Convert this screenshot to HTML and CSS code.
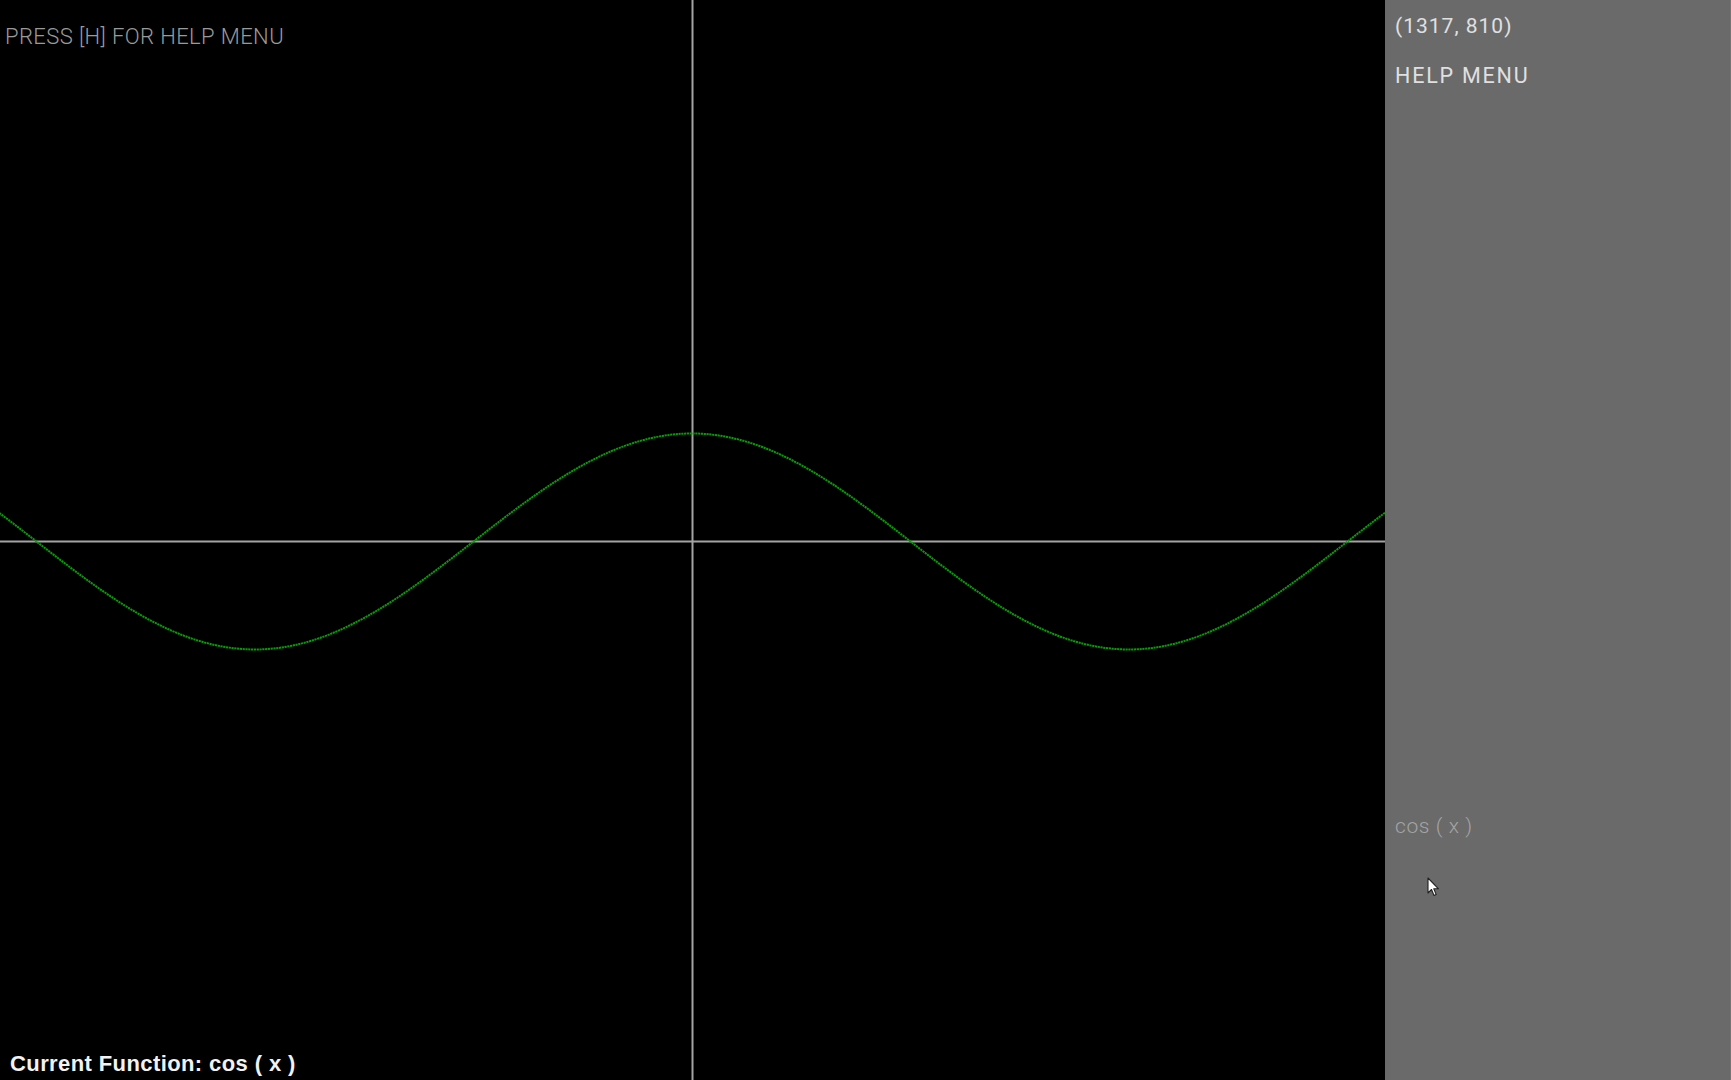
FILE: index.html
```html
<!DOCTYPE html>
<html>
<head>
<meta charset="utf-8">
<link rel="stylesheet" href="styles.css">
</head>
<body>
<div class="app">
  <main class="graph">
    <svg class="plot" width="1385" height="1080" viewBox="0 0 1385 1080">
      <line class="axis" x1="0" y1="541.5" x2="1385" y2="541.5"/>
      <line class="axis" x1="692.5" y1="0" x2="692.5" y2="1080"/>
      <g transform="translate(692,541.5) scale(139.1,-108)">
        <path class="curve" d="M -6.2832 1 C -5.7147 1 -5.2247 0.5123 -4.7124 0 C -4.2001 -0.5123 -3.7101 -1 -3.1416 -1 C -2.5731 -1 -2.0831 -0.5123 -1.5708 0 C -1.0585 0.5123 -0.5685 1 0 1 C 0.5685 1 1.0585 0.5123 1.5708 0 C 2.0831 -0.5123 2.5731 -1 3.1416 -1 C 3.7101 -1 4.2001 -0.5123 4.7124 0 C 5.2247 0.5123 5.7147 1 6.2832 1"/>
      </g>
    </svg>
    <div class="hint">PRESS [H] FOR HELP MENU</div>
    <div class="current">Current Function: cos ( x )</div>
  </main>
  <aside class="side">
    <div class="coords">(1317, 810)</div>
    <div class="help">HELP MENU</div>
    <div class="func">cos ( x )</div>
    <svg class="cursor" width="14" height="21" viewBox="0 0 14 21">
      <path d="M1 1 L1 16 L4.5 12.5 L7 18.5 L9.2 17.6 L6.8 11.8 L11.5 11.8 Z" fill="#fff" stroke="#222" stroke-width="1.1" stroke-linejoin="round"/>
    </svg>
  </aside>
</div>
</body>
</html>
```
FILE: styles.css
```css
html, body {
  margin: 0;
  padding: 0;
  background: #000;
  overflow: hidden;
}
.app {
  display: flex;
  width: 1731px;
  height: 1080px;
}
.graph {
  position: relative;
  width: 1385px;
  height: 1080px;
  background: #000;
  flex: none;
}
.plot {
  display: block;
}
.axis {
  stroke: #a3a3a3;
  stroke-width: 2;
}
.curve {
  fill: none;
  stroke: #0c980c;
  stroke-width: 2;
  vector-effect: non-scaling-stroke;
  stroke-dasharray: 2.2 0.6;
}
.hint {
  position: absolute;
  left: 5px;
  top: 24px;
  font-family: Roboto, "Liberation Sans", sans-serif;
  font-weight: 300;
  font-size: 22px;
  line-height: 26px;
  color: #9a9a9a;
  letter-spacing: 0.4px;
}
.current {
  position: absolute;
  left: 10px;
  top: 1051px;
  font-family: "Liberation Sans", Arial, sans-serif;
  font-weight: 700;
  font-size: 22px;
  line-height: 26px;
  letter-spacing: 0.4px;
  color: #f2f2f2;
}
.side {
  position: relative;
  flex: 1;
  background: #6a6a6a;
  padding: 13px 0 0 10px;
  box-sizing: border-box;
  border-right: 1px solid #747474;
  font-family: Roboto, "Liberation Sans", sans-serif;
}
.coords {
  font-size: 21px;
  line-height: 26px;
  letter-spacing: 1px;
  color: #e0e0e0;
}
.help {
  margin-top: 24px;
  font-size: 21.5px;
  line-height: 26px;
  letter-spacing: 1.8px;
  color: #e0e0e0;
}
.func {
  margin-top: 724px;
  font-size: 21px;
  font-weight: 300;
  line-height: 26px;
  letter-spacing: 0.6px;
  color: #a4a4a4;
}
.cursor {
  position: absolute;
  left: 42px;
  top: 877px;
}
```
